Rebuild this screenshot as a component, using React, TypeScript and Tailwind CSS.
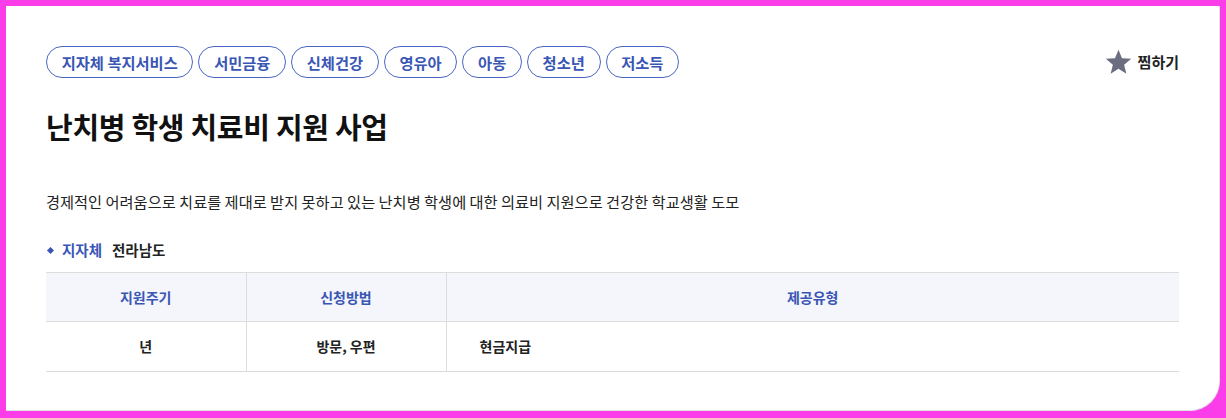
const TAGS = ["지자체 복지서비스", "서민금융", "신체건강", "영유아", "아동", "청소년", "저소득"];

function Star() {
  return (
    <svg width="27" height="26" viewBox="0 0 24 23" aria-hidden="true">
      <path d="M12 0.5l3.1 7.6 8.2.6-6.3 5.3 2 8-7-4.4-7 4.4 2-8L.7 8.7l8.2-.6z" fill="#6b6d80" />
    </svg>
  );
}

export default function App() {
  return (
    <div
      className="h-[418px] w-[1226px] bg-[#fb3de9] pt-[6px] pr-[6px] pb-[7px] pl-[6px]"
      style={{ fontFamily: '"Noto Sans CJK KR", "Noto Sans", sans-serif' }}
    >
      <div className="h-full rounded-br-[30px] border-r border-b border-[#e2e2e2] bg-white px-[40px] pt-[40px]">
        <div className="flex items-center justify-between">
          <ul className="flex gap-[5px]">
            {TAGS.map((t) => (
              <li
                key={t}
                className="flex h-[32px] items-center rounded-full border border-[#4a67c4] px-[14.7px] text-[15.3px] font-semibold text-[#3a56b4]"
              >
                {t}
              </li>
            ))}
          </ul>
          <button className="flex items-center gap-[6px] text-[15px] font-bold text-[#222]">
            <Star />
            찜하기
          </button>
        </div>

        <h1 className="mt-[28px] text-[29px] leading-[40px] font-bold tracking-[-0.3px] text-[#111]">
          난치병 학생 치료비 지원 사업
        </h1>

        <p className="mt-[43px] text-[15.25px] leading-[24px] text-[#222]">
          경제적인 어려움으로 치료를 제대로 받지 못하고 있는 난치병 학생에 대한 의료비 지원으로 건강한 학교생활 도모
        </p>

        <div className="mt-[27px] flex items-center text-[14.5px] leading-[20px] font-bold">
          <span className="mr-[9px] ml-[2px] h-[5px] w-[5px] rotate-45 bg-[#3a56b4]" />
          <span className="text-[#3a56b4]">지자체</span>
          <span className="ml-[10px] text-[#222]">전라남도</span>
        </div>

        <table className="mt-[12px] w-full border-collapse text-[14px]">
          <thead>
            <tr className="h-[49px] border-t border-b border-[#dcdcdc] bg-[#f4f6fb] text-[#3a56b4]">
              <th className="w-[200px] border-r border-[#dcdcdc] font-bold">지원주기</th>
              <th className="w-[200px] border-r border-[#dcdcdc] font-bold">신청방법</th>
              <th className="font-bold">제공유형</th>
            </tr>
          </thead>
          <tbody>
            <tr className="h-[50px] border-b border-[#dcdcdc] font-bold text-[#222]">
              <td className="border-r border-[#dcdcdc] text-center">년</td>
              <td className="border-r border-[#dcdcdc] text-center">방문, 우편</td>
              <td className="pl-[33px]">현금지급</td>
            </tr>
          </tbody>
        </table>
      </div>
    </div>
  );
}
